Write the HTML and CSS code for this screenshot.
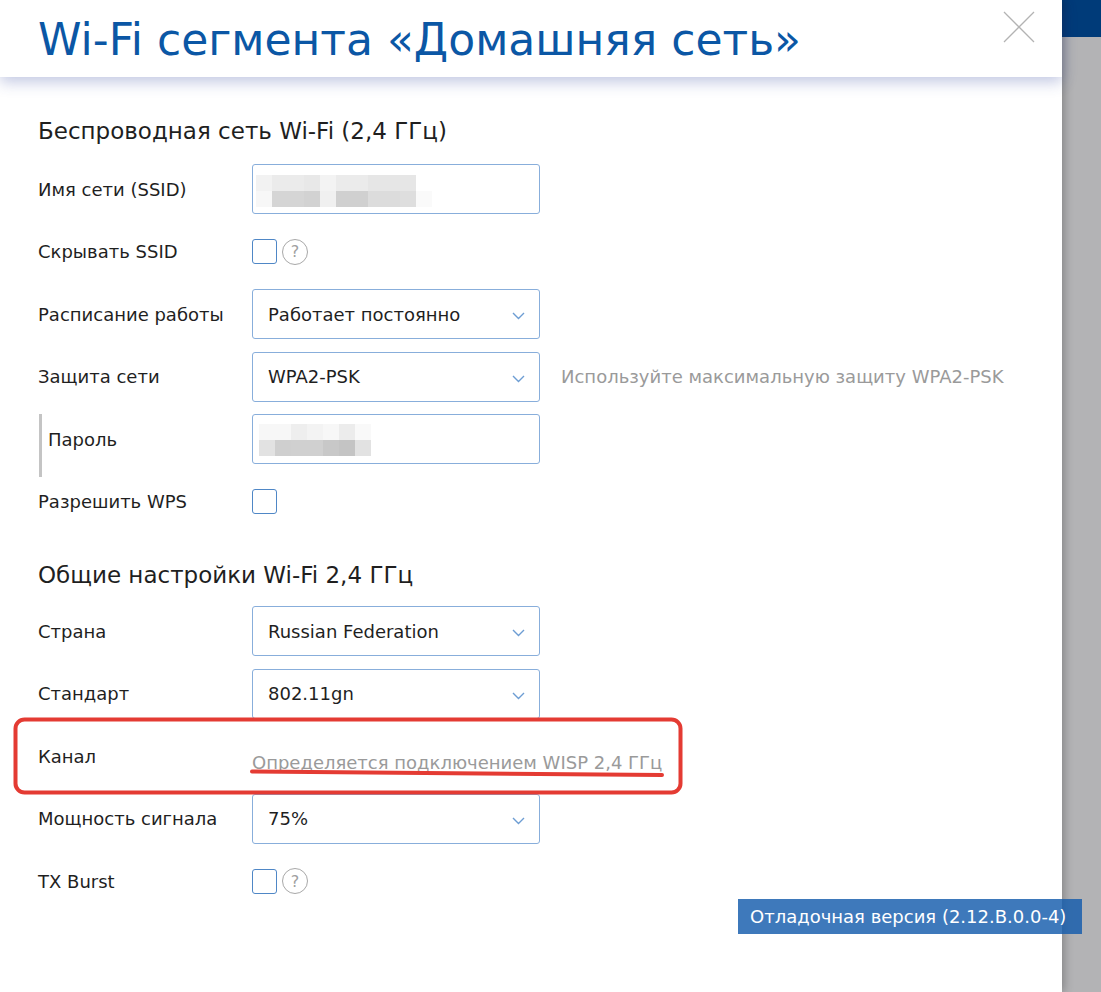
FILE: index.html
```html
<!DOCTYPE html>
<html lang="ru">
<head>
<meta charset="utf-8">
<title>Wi-Fi сегмента «Домашняя сеть»</title>
<link rel="stylesheet" href="styles.css">
</head>
<body>
<div class="page">
  <div class="modal">
    <header class="modal-head">
      <h1 class="modal-title">Wi-Fi сегмента «Домашняя сеть»</h1>
      <button class="close" type="button" aria-label="Закрыть">
        <svg width="32" height="32" viewBox="0 0 32 32"><path d="M1 1 L31 31 M31 1 L1 31" stroke="#b3b3b3" stroke-width="1.3" fill="none"/></svg>
      </button>
    </header>
    <div class="modal-body">
      <section class="group">
        <h2 class="group-title">Беспроводная сеть Wi-Fi (2,4 ГГц)</h2>
        <div class="row">
          <div class="row-label">Имя сети (SSID)</div>
          <div class="field">
            <div class="blur blur-ssid">
              <i class="c f2"></i><i class="c eb"></i><i class="c eb"></i><i class="c e8"></i><i class="c f3"></i><i class="c eb"></i><i class="c eb"></i><i class="c e6"></i><i class="c e6"></i><i class="c e6"></i><i class="c ff"></i>
              <i class="c f7"></i><i class="c d5"></i><i class="c d5"></i><i class="c d2"></i><i class="c f0"></i><i class="c d0"></i><i class="c d0"></i><i class="c dc"></i><i class="c dc"></i><i class="c de"></i><i class="c fa"></i>
            </div>
          </div>
        </div>
        <div class="row">
          <div class="row-label">Скрывать SSID</div>
          <div class="check-wrap"><span class="checkbox"></span><span class="help">?</span></div>
        </div>
        <div class="row">
          <div class="row-label">Расписание работы</div>
          <div class="field select"><span>Работает постоянно</span><svg class="chev" width="13" height="8" viewBox="0 0 13 8"><path d="M1 1 L6.5 6.5 L12 1" stroke="#6d9dd3" stroke-width="1.4" fill="none"/></svg></div>
        </div>
        <div class="row">
          <div class="row-label">Защита сети</div>
          <div class="field select"><span>WPA2-PSK</span><svg class="chev" width="13" height="8" viewBox="0 0 13 8"><path d="M1 1 L6.5 6.5 L12 1" stroke="#6d9dd3" stroke-width="1.4" fill="none"/></svg></div>
          <div class="hint">Используйте максимальную защиту WPA2-PSK</div>
        </div>
        <div class="row">
          <div class="row-label sub-label">Пароль</div>
          <div class="field">
            <div class="blur blur-pass">
              <i class="c f7"></i><i class="c f7"></i><i class="c ee"></i><i class="c f3"></i><i class="c f7"></i><i class="c ec"></i><i class="c f9"></i>
              <i class="c e2"></i><i class="c cf"></i><i class="c d0"></i><i class="c d0"></i><i class="c c8"></i><i class="c c4"></i><i class="c e2"></i>
            </div>
          </div>
        </div>
        <div class="row">
          <div class="row-label">Разрешить WPS</div>
          <div class="check-wrap"><span class="checkbox"></span></div>
        </div>
      </section>
      <section class="group group-second">
        <h2 class="group-title">Общие настройки Wi-Fi 2,4 ГГц</h2>
        <div class="row">
          <div class="row-label">Страна</div>
          <div class="field select"><span>Russian Federation</span><svg class="chev" width="13" height="8" viewBox="0 0 13 8"><path d="M1 1 L6.5 6.5 L12 1" stroke="#6d9dd3" stroke-width="1.4" fill="none"/></svg></div>
        </div>
        <div class="row">
          <div class="row-label">Стандарт</div>
          <div class="field select"><span>802.11gn</span><svg class="chev" width="13" height="8" viewBox="0 0 13 8"><path d="M1 1 L6.5 6.5 L12 1" stroke="#6d9dd3" stroke-width="1.4" fill="none"/></svg></div>
        </div>
        <div class="row">
          <div class="row-label">Канал</div>
          <div class="value-text">Определяется подключением WISP 2,4 ГГц</div>
        </div>
        <div class="row">
          <div class="row-label">Мощность сигнала</div>
          <div class="field select"><span>75%</span><svg class="chev" width="13" height="8" viewBox="0 0 13 8"><path d="M1 1 L6.5 6.5 L12 1" stroke="#6d9dd3" stroke-width="1.4" fill="none"/></svg></div>
        </div>
        <div class="row">
          <div class="row-label">TX Burst</div>
          <div class="check-wrap"><span class="checkbox"></span><span class="help">?</span></div>
        </div>
      </section>
    </div>
  </div>
  <div class="side"><div class="side-top"></div></div>
  <div class="debug-badge">Отладочная версия (2.12.B.0.0-4)</div>
  <svg class="annotation" width="1101" height="992" viewBox="0 0 1101 992">
    <rect x="15.5" y="719.5" width="665" height="73" rx="9" ry="9" fill="none" stroke="#e43b33" stroke-width="4"/>
    <path d="M252 771.5 Q 450 773.5 662 775" fill="none" stroke="#e43b33" stroke-width="4" stroke-linecap="round"/>
  </svg>
</div>
</body>
</html>
```
FILE: styles.css
```css
* { box-sizing: border-box; }
html, body { margin: 0; padding: 0; }
body {
  font-family: "DejaVu Sans", Verdana, sans-serif;
  color: #1f1f1f;
  background: #fff;
}
.page {
  position: relative;
  display: flex;
  width: 1101px;
  height: 992px;
  overflow: hidden;
}
.modal {
  width: 1062px;
  flex: none;
  background: #fff;
  position: relative;
  z-index: 2;
  box-shadow: 2px 0 9px rgba(0, 0, 0, 0.28);
}
.modal-head {
  height: 77px;
  display: flex;
  align-items: flex-start;
  justify-content: space-between;
  padding: 0 27px 0 38px;
  background: #fff;
  position: relative;
  z-index: 1;
  box-shadow: 0 5px 14px rgba(50, 70, 160, 0.3);
}
.modal-title {
  margin: 0;
  font-weight: normal;
  font-size: 44px;
  line-height: 79px;
  color: #0b57a5;
  letter-spacing: 0;
}
.close {
  margin-top: 11px;
  padding: 0;
  border: 0;
  background: none;
  width: 32px;
  height: 32px;
  display: block;
}
.close svg { display: block; }
.modal-body {
  padding: 39px 0 0 38px;
  font-size: 18px;
}
.group-title {
  margin: 0 0 18px;
  font-weight: normal;
  font-size: 23px;
  line-height: 30px;
  color: #1f1f1f;
}
.group-second { margin-top: 33.5px; }
.group-second .group-title { margin-bottom: 16px; }
.row {
  display: flex;
  align-items: center;
  height: 50px;
  margin-bottom: 12.5px;
}
.row-label {
  width: 214px;
  flex: none;
}
.sub-label {
  align-self: flex-start;
  width: 213px;
  margin-left: 1px;
  height: 62.5px;
  padding: 0 0 12.5px 6px;
  border-left: 3px solid #c4c4c4;
  display: flex;
  align-items: center;
}
.field {
  width: 288px;
  height: 50px;
  flex: none;
  border: 1px solid #88aedb;
  border-radius: 3px;
  display: flex;
  align-items: center;
  padding: 0 15px;
  background: #fff;
}
.select .chev {
  margin-left: auto;
  margin-top: 4px;
  margin-right: -1px;
  flex: none;
}
.hint {
  margin-left: 21px;
  color: #9a9a9a;
  white-space: nowrap;
}
.check-wrap {
  display: flex;
  align-items: center;
  gap: 5px;
}
.checkbox {
  width: 25px;
  height: 25px;
  border: 1.5px solid #4f87c6;
  border-radius: 3px;
  display: block;
}
.help {
  width: 26px;
  height: 26px;
  border: 1.5px solid #a8a8a8;
  border-radius: 50%;
  color: #a0a0a0;
  font-size: 16px;
  display: flex;
  align-items: center;
  justify-content: center;
}
.value-text {
  color: #9a9a9a;
  padding-top: 13px;
  white-space: nowrap;
}
.blur {
  display: grid;
  grid-template-columns: repeat(11, 16px);
  grid-auto-rows: 16px;
  margin-left: -12px;
  margin-top: 3px;
}
.blur-pass {
  grid-template-columns: repeat(7, 16px);
  margin-left: -9px;
  margin-top: 2px;
}
.c { display: block; }
.ff { background: #ffffff; }
.fa { background: #fafafa; }
.f9 { background: #f9f9f9; }
.f7 { background: #f7f7f7; }
.f3 { background: #f3f3f3; }
.f2 { background: #f2f2f2; }
.f0 { background: #f0f0f0; }
.ee { background: #eeeeee; }
.ec { background: #ececec; }
.eb { background: #ebebeb; }
.e8 { background: #e8e8e8; }
.e6 { background: #e6e6e6; }
.e2 { background: #e2e2e2; }
.de { background: #dedede; }
.dc { background: #dcdcdc; }
.d5 { background: #d5d5d5; }
.d2 { background: #d2d2d2; }
.d0 { background: #d0d0d0; }
.cf { background: #cfcfcf; }
.c8 { background: #c8c8c8; }
.c4 { background: #c4c4c4; }
.side {
  flex: 1;
  background: #b3b3b5;
  position: relative;
  z-index: 1;
}
.side-top {
  height: 37px;
  background: #003b79;
}
.debug-badge {
  position: absolute;
  left: 738px;
  top: 899px;
  width: 344px;
  height: 35px;
  z-index: 5;
  background: rgba(20, 92, 172, 0.82);
  color: #fff;
  font-size: 18px;
  line-height: 35px;
  padding-left: 12px;
  white-space: nowrap;
}
.annotation {
  position: absolute;
  left: 0;
  top: 0;
  z-index: 6;
  pointer-events: none;
}
```
